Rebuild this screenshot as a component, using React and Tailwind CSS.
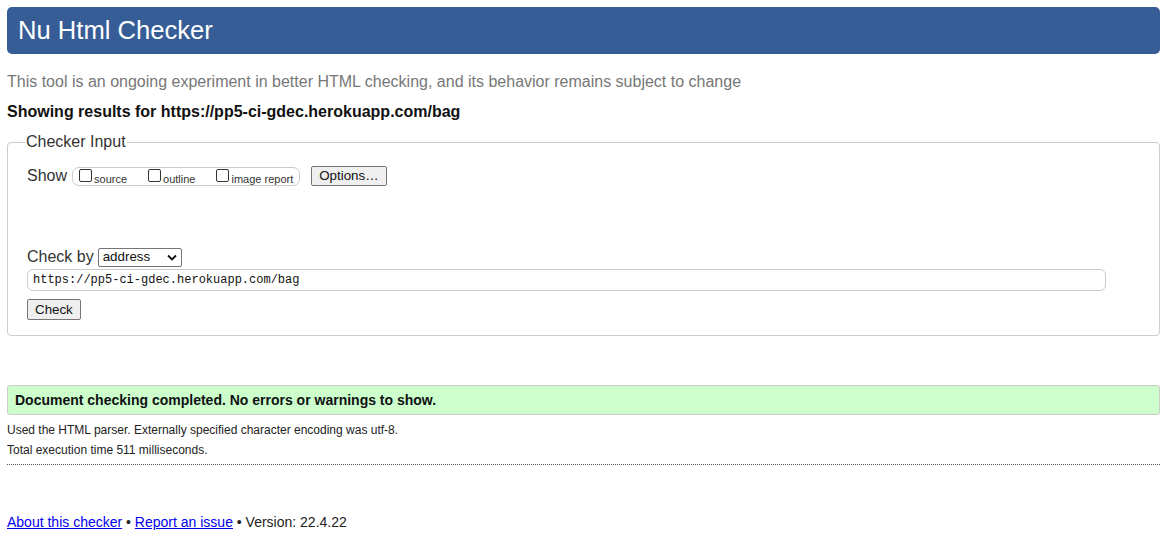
import React from "react";

function Box() {
  return <span className="inline-block w-[13px] h-[13px] border border-[#333] rounded-[2px] bg-white mr-[2px] mt-[1px] shrink-0" />;
}

export default function App() {
  return (
    <div className="bg-white min-h-[543px] pl-[7px] pr-[12px] pt-[7px] text-[#000]" style={{ fontFamily: '"Liberation Sans", Arial, sans-serif' }}>
      <div className="h-[47px] bg-[#365d95] rounded-[5px] flex items-center pl-[11px]">
        <h1 className="text-white text-[25.6px] leading-none">Nu Html Checker</h1>
      </div>
      <p className="mt-[18px] text-[16px] leading-[20px] text-[#777]">This tool is an ongoing experiment in better HTML checking, and its behavior remains subject to change</p>
      <p className="mt-[10px] text-[16px] leading-[20px] font-bold text-[#111]">Showing results for https://pp5-ci-gdec.herokuapp.com/bag</p>

      <fieldset className="mt-[11px] border border-[#ccc] rounded-[4px] px-[19px] pt-[14px] pb-[14px] h-[203px]">
        <legend className="text-[16px] leading-[18px] text-[#333] px-[1px] ml-[-2px]">Checker Input</legend>
        <div className="flex items-center h-[22px]">
          <span className="text-[16px] text-[#333] mr-[5px]">Show</span>
          <span className="flex items-start h-[19px] border border-[#ccc] rounded-[7px] pl-[6px] pr-[6px] text-[11px] text-[#333]">
            <Box /><span className="pt-[3px] mr-[21px]">source</span>
            <Box /><span className="pt-[3px] mr-[21px]">outline</span>
            <Box /><span className="pt-[3px]">image report</span>
          </span>
          <span className="ml-[11px] h-[20px] px-[7px] border border-[#767676] rounded-[2px] bg-[#efefef] text-[13.33px] text-[#111] flex items-center">Options…</span>
        </div>
        <div className="mt-[60px] flex items-center h-[20px]">
          <span className="text-[16px] text-[#333] mr-[4px]">Check by</span>
          <span className="w-[84px] h-[19px] border border-[#767676] rounded-[2px] flex items-center justify-between pl-[4px] pr-[4px] text-[13.33px] text-[#111]">
            address
            <svg width="10" height="7" viewBox="0 0 10 7"><path d="M1 1.5 L5 5.5 L9 1.5" fill="none" stroke="#111" strokeWidth="1.8" /></svg>
          </span>
        </div>
        <div className="mt-[2px] w-[1079px] h-[22px] border border-[#ccc] rounded-[6px] flex items-center pl-[5px] text-[12px] text-[#111]" style={{ fontFamily: '"Liberation Mono", "DejaVu Sans Mono", monospace' }}>
          https://pp5-ci-gdec.herokuapp.com/bag
        </div>
        <div className="mt-[6px]">
          <span className="inline-flex items-center h-[21px] px-[7px] border border-[#767676] rounded-[2px] bg-[#efefef] text-[13.33px] text-[#111]">Check</span>
        </div>
      </fieldset>

      <div className="mt-[49px] h-[30px] bg-[#ccffcc] border border-[#ccc] rounded-[3px] flex items-center pl-[7px]">
        <span className="text-[14px] font-bold text-[#111]">Document checking completed. No errors or warnings to show.</span>
      </div>
      <p className="mt-[5px] text-[12px] leading-[20px] text-[#222]">Used the HTML parser. Externally specified character encoding was utf-8.</p>
      <p className="text-[12px] leading-[20px] text-[#222]">Total execution time 511 milliseconds.</p>
      <div className="mt-[4px] border-t border-dotted border-[#555]" />
      <p className="mt-[47px] text-[14px] text-[#222]">
        <a className="text-[#0000ee] underline">About this checker</a> • <a className="text-[#0000ee] underline">Report an issue</a> • Version: 22.4.22
      </p>
    </div>
  );
}
